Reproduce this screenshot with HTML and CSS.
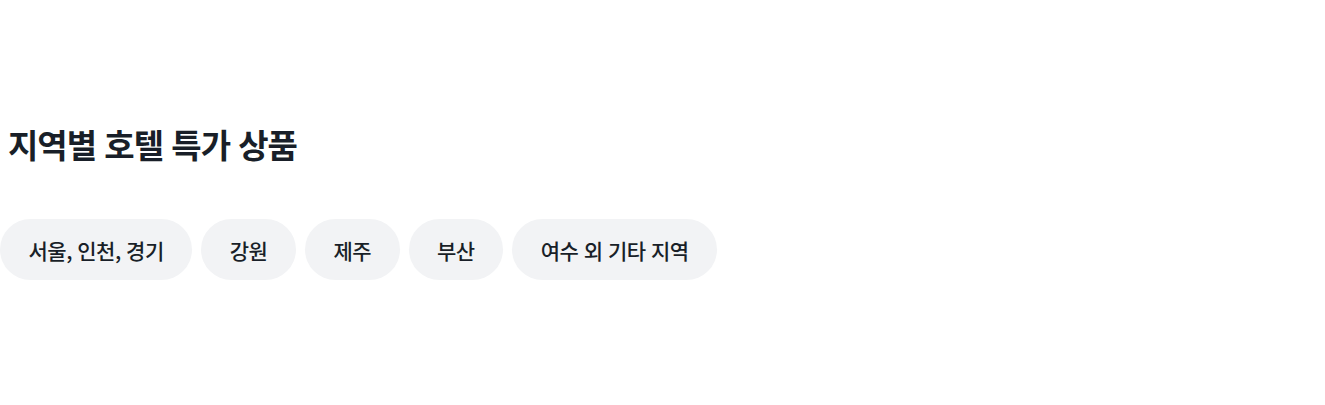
FILE: index.html
```html
<!DOCTYPE html>
<html lang="ko">
<head>
<meta charset="utf-8">
<link rel="stylesheet" href="styles.css">
</head>
<body>
<section class="section">
  <h2 class="title">지역별 호텔 특가 상품</h2>
  <div class="chips">
    <button class="chip">서울, 인천, 경기</button>
    <button class="chip">강원</button>
    <button class="chip">제주</button>
    <button class="chip">부산</button>
    <button class="chip">여수 외 기타 지역</button>
  </div>
</section>
</body>
</html>
```
FILE: styles.css
```css
html, body {
  margin: 0;
  padding: 0;
  background: #ffffff;
}
body {
  font-family: "Noto Sans CJK KR", "Noto Sans", sans-serif;
  color: #191f28;
}
.section {
  padding-top: 118px;
}
.title {
  margin: 0 0 0 8px;
  font-size: 33px;
  font-weight: 700;
  line-height: 52px;
  letter-spacing: -1px;
  color: #191f28;
}
.chips {
  display: flex;
  gap: 9px;
  margin-top: 49px;
}
.chip {
  font-family: inherit;
  border: none;
  background: #f2f3f5;
  border-radius: 31px;
  height: 61px;
  padding: 0 28.5px;
  font-size: 21px;
  font-weight: 500;
  color: #191f28;
  letter-spacing: -0.5px;
}
```
